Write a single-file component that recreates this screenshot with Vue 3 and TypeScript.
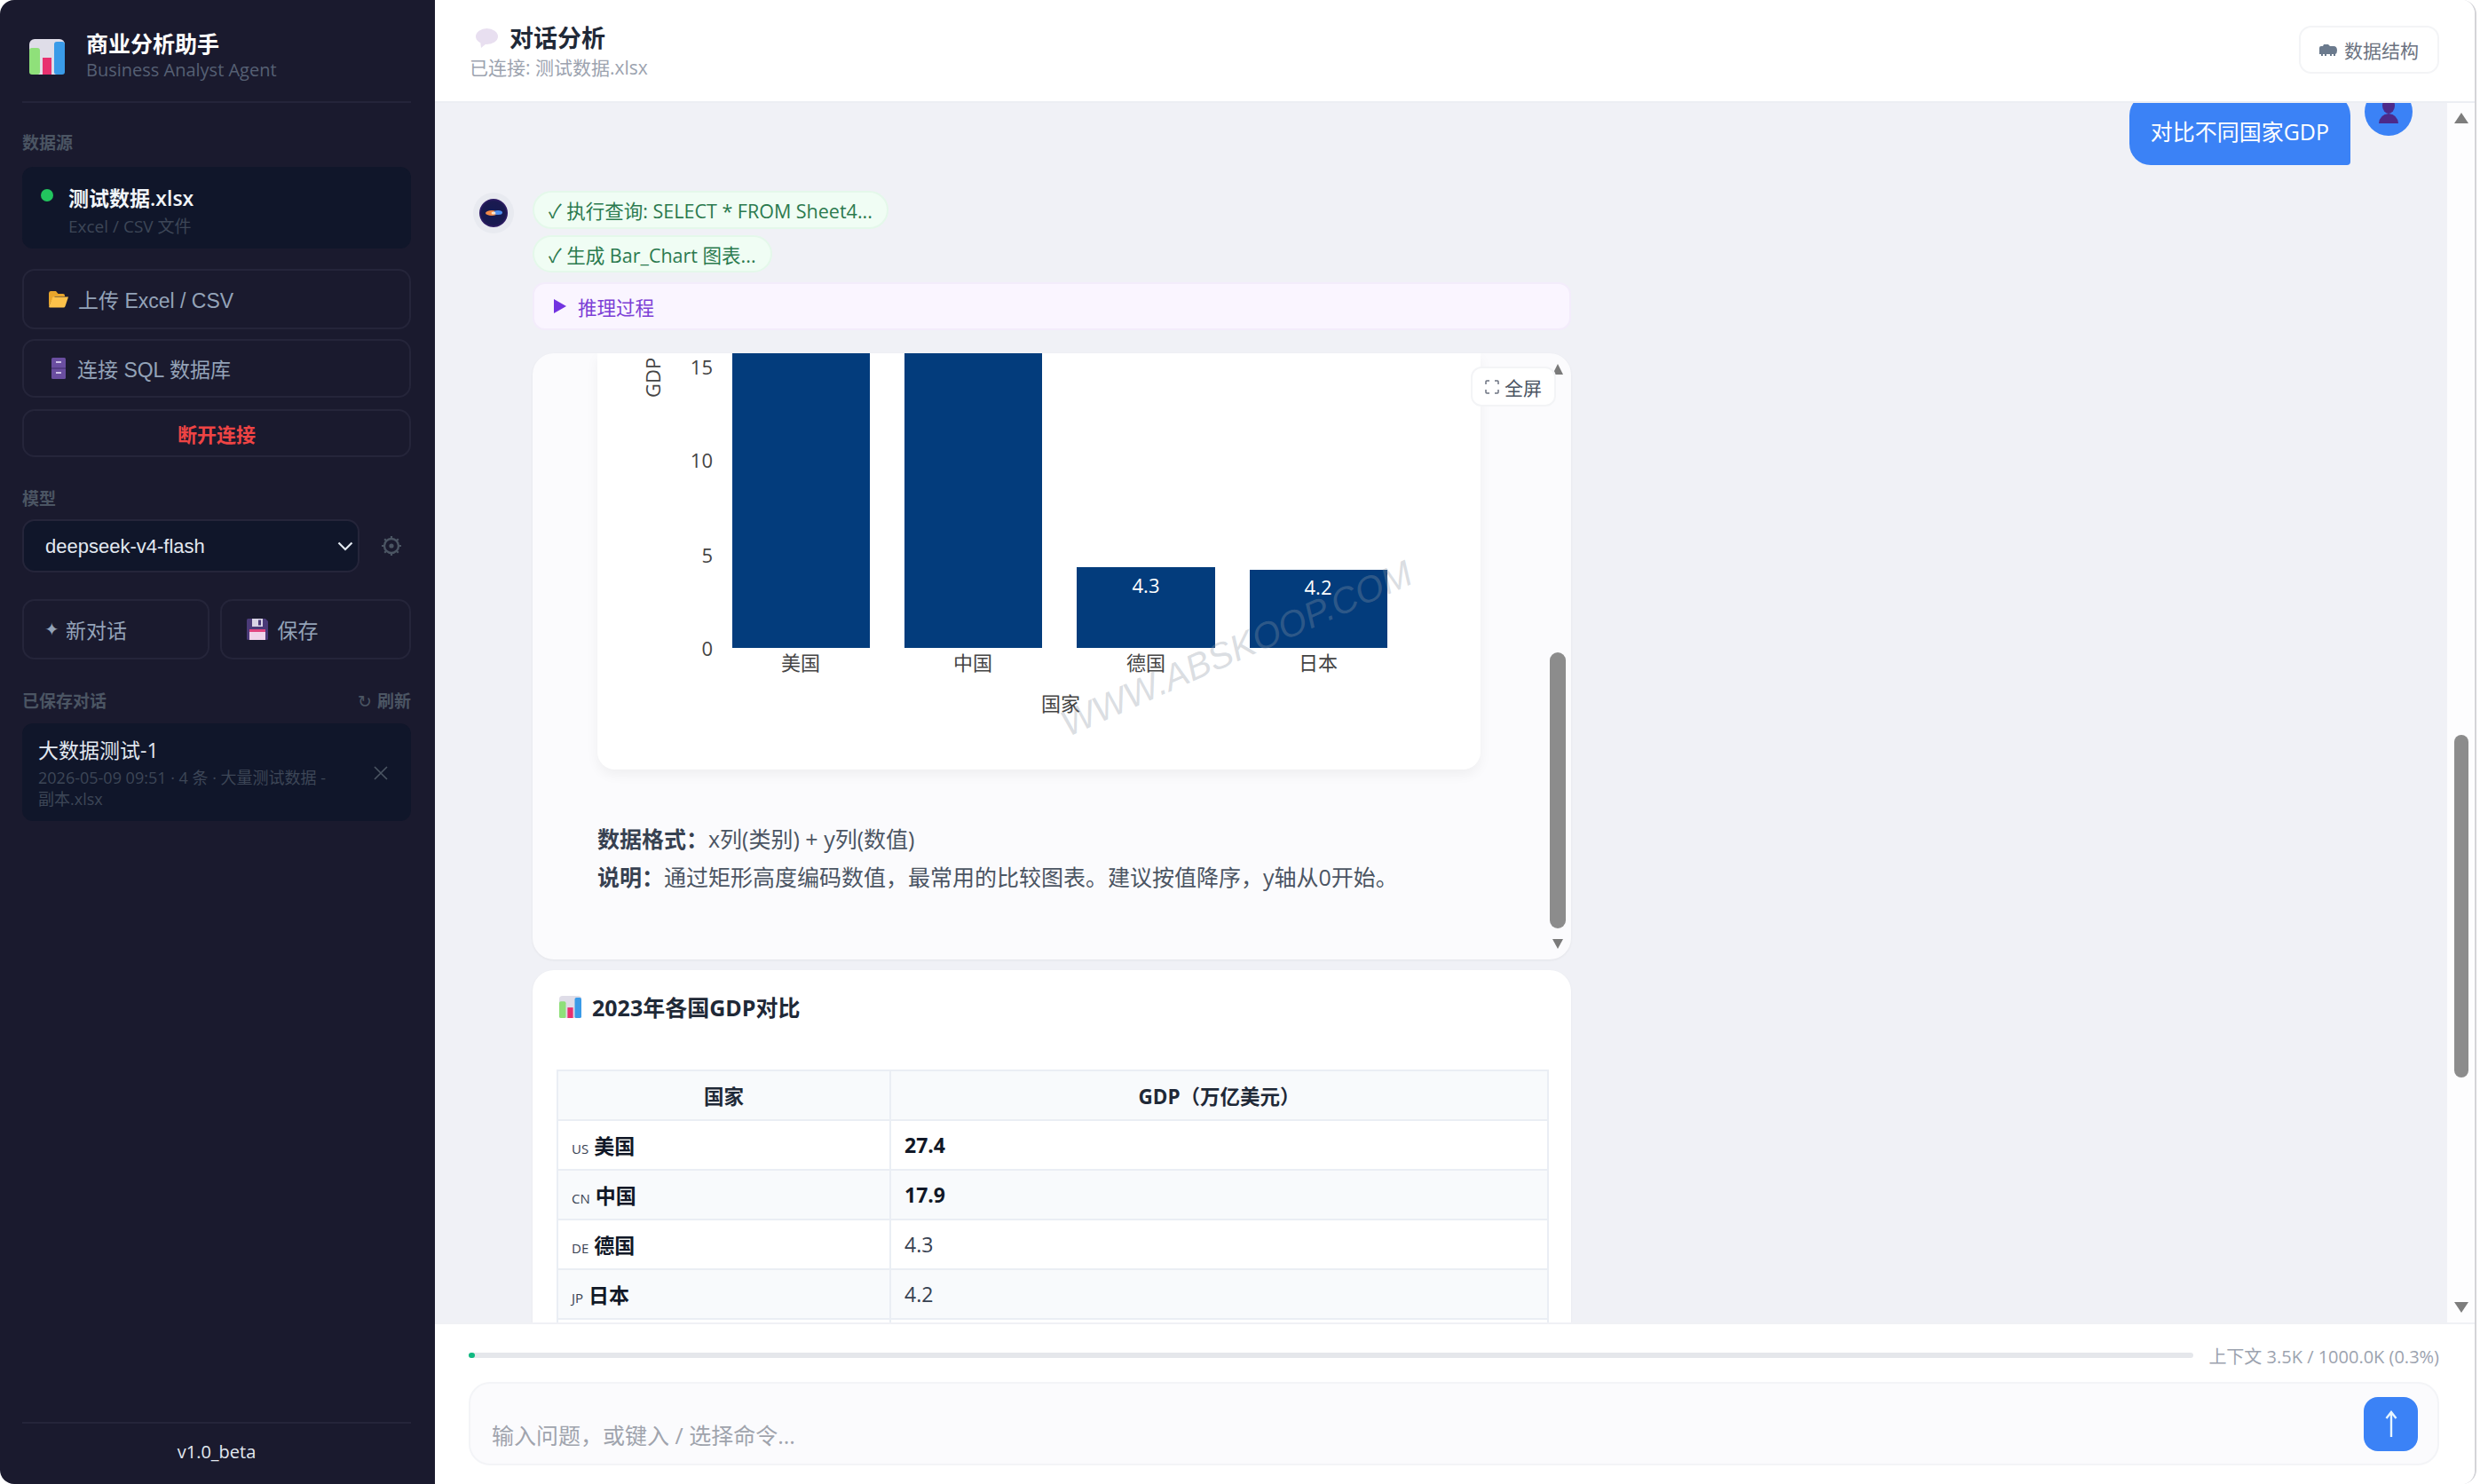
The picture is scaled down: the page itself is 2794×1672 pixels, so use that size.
<script setup lang="ts">
interface GdpRow { code: string; name: string; value: string; strong: boolean }
const rows: GdpRow[] = [
  { code: 'US', name: '美国', value: '27.4', strong: true },
  { code: 'CN', name: '中国', value: '17.9', strong: true },
  { code: 'DE', name: '德国', value: '4.3', strong: false },
  { code: 'JP', name: '日本', value: '4.2', strong: false },
]
interface Bar { x: number; w: number; top: number; label: string; cx: number; value?: string; vy?: number }
const bars: Bar[] = [
  { x: 152, w: 155, top: 0, label: '美国', cx: 229 },
  { x: 346, w: 155, top: 0, label: '中国', cx: 423 },
  { x: 540, w: 156, top: 241, label: '德国', cx: 618, value: '4.3', vy: 270 },
  { x: 735, w: 155, top: 244, label: '日本', cx: 812, value: '4.2', vy: 272 },
]
const ticks = [
  { y: 24, t: '15' },
  { y: 129, t: '10' },
  { y: 236, t: '5' },
  { y: 341, t: '0' },
]
</script>

<template>
  <div class="window">
    <aside class="sidebar">
      <div class="brand">
        <svg class="logo" viewBox="0 0 40 40">
          <rect width="40" height="40" rx="6" fill="#dfdde8" />
          <rect x="0" y="10" width="12" height="30" rx="3" fill="#8fe07a" />
          <rect x="15" y="21" width="10" height="19" fill="#e8306f" />
          <rect x="28" y="3" width="12" height="37" rx="3" fill="#3a9be8" />
        </svg>
        <div class="brand-text">
          <div class="brand-title">商业分析助手</div>
          <div class="brand-sub">Business Analyst Agent</div>
        </div>
      </div>

      <div class="label label-source">数据源</div>
      <div class="source">
        <span class="dot"></span>
        <div>
          <div class="source-name">测试数据.xlsx</div>
          <div class="source-sub">Excel / CSV 文件</div>
        </div>
      </div>
      <button class="side-btn upload">
        <svg class="ico-folder" viewBox="0 0 24 20">
          <path d="M1 3.5Q1 1 3 1h6l2.5 3H17q2 0 2 2v1H8L5 10 1 18Z" fill="#e8a52c" />
          <path d="M5.5 7.5H23L19.5 18q-.5 1.5-2 1.5H2.5q-1.8 0-1.3-1.5Z" fill="#fdc24a" />
        </svg>
        上传 Excel / CSV
      </button>
      <button class="side-btn connect">
        <svg class="ico-cabinet" viewBox="0 0 16 24">
          <rect width="16" height="24" rx="1.5" fill="#6a4ea0" />
          <rect y="11.5" width="16" height="1" fill="#3d2b66" />
          <rect x="5" y="4" width="6" height="2" fill="#cfc3e8" />
          <rect x="5" y="16" width="6" height="2" fill="#cfc3e8" />
        </svg>
        连接 SQL 数据库
      </button>
      <button class="side-btn disconnect">断开连接</button>

      <div class="label label-model">模型</div>
      <div class="model-row">
        <div class="select-wrap">
          <select class="model-select">
            <option>deepseek-v4-flash</option>
          </select>
          <svg class="chevron" viewBox="0 0 18 11">
            <path d="M1.5 1.5 9 9l7.5-7.5" fill="none" stroke="#e2e8f0" stroke-width="2.2" />
          </svg>
        </div>
        <svg class="gear" viewBox="0 0 24 24">
          <circle cx="12" cy="12" r="8" fill="none" stroke="#4b5563" stroke-width="2.4" />
          <circle cx="12" cy="12" r="2.6" fill="#4b5563" />
          <path d="M12 1v3M12 20v3M1 12h3M20 12h3M4.2 4.2l2.2 2.2M17.6 17.6l2.2 2.2M4.2 19.8l2.2-2.2M17.6 6.4l2.2-2.2" stroke="#4b5563" stroke-width="2.2" />
        </svg>
      </div>

      <div class="actions">
        <button class="side-btn act"><span class="spark">✦</span>新对话</button>
        <button class="side-btn act save">
          <svg class="ico-floppy" viewBox="0 0 24 24">
            <path d="M1.5 0H21l3 3v19.5q0 1.5-1.5 1.5h-21Q0 24 0 22.500V1.500Q0 0 1.500 0Z" fill="#4a3a78" />
            <rect x="6" y="0" width="12" height="9" fill="#d9d4e6" />
            <rect x="13" y="1.500" width="3" height="6" fill="#4a3a78" />
            <rect x="3" y="12" width="18" height="3" fill="#e0457f" />
            <rect x="3" y="15" width="18" height="9" fill="#f0d4ea" />
          </svg>
          保存
        </button>
      </div>

      <div class="saved-head">
        <span class="label">已保存对话</span>
        <span class="refresh"><span class="refresh-ico">↻</span>刷新</span>
      </div>
      <div class="saved-card">
        <div class="saved-body">
          <div class="saved-title">大数据测试-1</div>
          <div class="saved-meta">2026-05-09 09:51 · 4 条 · 大量测试数据 - 副本.xlsx</div>
        </div>
        <svg class="saved-x" viewBox="0 0 16 16">
          <path d="M1 1l14 14M15 1 1 15" stroke="#4b5563" stroke-width="1.6" />
        </svg>
      </div>

      <div class="side-foot">v1.0_beta</div>
    </aside>

    <main class="main">
      <header class="topbar">
        <div>
          <div class="top-title">
            <svg class="ico-balloon" viewBox="0 0 26 22">
              <ellipse cx="13.500" cy="9" rx="12.500" ry="9" fill="#e8dff0" />
              <path d="M6 14l1 8 6-5Z" fill="#e8dff0" />
            </svg>
            对话分析
          </div>
          <div class="top-sub">已连接: 测试数据.xlsx</div>
        </div>
        <button class="schema-btn">
          <svg class="ico-schema" viewBox="0 0 20 13">
            <path d="M0 4q0-2 2-2h2l1-2h5l2 2h4q4 0 4 5 0 3-2 4v2h-2v-2h-2v2h-2v-2H8v2H6v-2H4v2H2v-2H0Z" fill="#6b7a8d" />
          </svg>
          数据结构
        </button>
      </header>

      <div class="chat">
        <div class="messages">
          <div class="user-row">
            <div class="bubble">对比不同国家GDP</div>
            <div class="user-avatar">
              <svg viewBox="0 0 54 54" width="54" height="54">
                <ellipse cx="27" cy="20" rx="7" ry="9" fill="#4c2a8a" />
                <path d="M16 40q1-10 11-11 10 1 11 11Z" fill="#4c2a8a" />
              </svg>
            </div>
          </div>

          <div class="bot-row">
            <div class="bot-avatar">
              <svg viewBox="0 0 32 32" width="32" height="32">
                <defs>
                  <radialGradient id="orb" cx="50%" cy="50%" r="55%">
                    <stop offset="0%" stop-color="#141a52" />
                    <stop offset="75%" stop-color="#1a1a50" />
                    <stop offset="100%" stop-color="#43207a" />
                  </radialGradient>
                </defs>
                <circle cx="16" cy="16" r="16" fill="url(#orb)" />
                <ellipse cx="14" cy="16" rx="7" ry="3" fill="#f28a4a" />
                <ellipse cx="21" cy="15.500" rx="5" ry="2.500" fill="#4f8ff0" />
                <ellipse cx="16" cy="16" rx="2.500" ry="1.500" fill="#fde6d0" />
              </svg>
            </div>
            <div class="bot-col">
              <div class="pill pill-1">✓ 执行查询: SELECT * FROM Sheet4...</div>
              <div class="pill pill-2">✓ 生成 Bar_Chart 图表...</div>
              <div class="reason"><span class="tri"></span>推理过程</div>

              <div class="chart-wrap">
                <div class="chart-card">
                  <svg class="chart" viewBox="0 0 995 469" width="995" height="469">
                    <rect
                      v-for="b in bars"
                      :key="b.label"
                      :x="b.x"
                      :y="b.top"
                      :width="b.w"
                      :height="332 - b.top"
                      fill="#033c7c"
                    />
                    <text v-for="t in ticks" :key="t.t" x="130" :y="t.y" text-anchor="end" class="tick">{{ t.t }}</text>
                    <text v-for="b in bars" :key="b.label + 'l'" :x="b.cx" y="357" text-anchor="middle" class="tick">{{ b.label }}</text>
                    <template v-for="b in bars" :key="b.label + 'v'">
                      <text v-if="b.value" :x="b.cx" :y="b.vy" text-anchor="middle" class="val">{{ b.value }}</text>
                    </template>
                    <text x="522" y="403" text-anchor="middle" class="tick">国家</text>
                    <text transform="translate(71 50) rotate(-90)" class="tick">GDP</text>
                  </svg>
                </div>
                <div class="chart-desc">
                  <p><strong>数据格式：</strong>x列(类别) + y列(数值)</p>
                  <p><strong>说明：</strong>通过矩形高度编码数值，最常用的比较图表。建议按值降序，y轴从0开始。</p>
                </div>
                <div class="watermark">WWW.ABSKOOP.COM</div>
                <span class="mini-up"></span>
                <button class="full-btn">
                  <svg class="ico-full" viewBox="0 0 16 16">
                    <path d="M1 5V2q0-1 1-1h3M11 1h3q1 0 1 1v3M15 11v3q0 1-1 1h-3M5 15H2q-1 0-1-1v-3" fill="none" stroke="#6b7280" stroke-width="1.500" />
                  </svg>
                  全屏
                </button>
                <div class="mini-thumb"></div>
                <span class="mini-down"></span>
              </div>

              <div class="table-card">
                <div class="table-title">
                  <svg class="ico-bars" viewBox="0 0 40 40">
                    <rect width="40" height="40" rx="6" fill="#dfdde8" />
                    <rect x="0" y="10" width="12" height="30" rx="3" fill="#8fe07a" />
                    <rect x="15" y="21" width="10" height="19" fill="#e8306f" />
                    <rect x="28" y="3" width="12" height="37" rx="3" fill="#3a9be8" />
                  </svg>
                  2023年各国GDP对比
                </div>
                <table class="gdp">
                  <thead>
                    <tr><th class="c1">国家</th><th>GDP（万亿美元）</th></tr>
                  </thead>
                  <tbody>
                    <tr v-for="r in rows" :key="r.code">
                      <td><span class="code">{{ r.code }}</span> <strong>{{ r.name }}</strong></td>
                      <td>
                        <strong v-if="r.strong">{{ r.value }}</strong>
                        <template v-else>{{ r.value }}</template>
                      </td>
                    </tr>
                    <tr><td>&nbsp;</td><td></td></tr>
                  </tbody>
                </table>
              </div>
            </div>
          </div>
        </div>
        <div class="scrollbar">
          <span class="arrow-up"></span>
          <div class="thumb"></div>
          <span class="arrow-down"></span>
        </div>
      </div>

      <footer class="composer">
        <div class="ctx">
          <div class="ctx-bar"><div class="ctx-fill"></div></div>
          <span class="ctx-text">上下文 3.5K / 1000.0K (0.3%)</span>
        </div>
        <div class="input-box">
          <input class="input" placeholder="输入问题，或键入 / 选择命令..." />
          <button class="send">
            <svg viewBox="0 0 16 30" width="16" height="30">
              <path d="M8 30V3M2.500 9 8 2l5.500 7" fill="none" stroke="#e6f5ff" stroke-width="2.400" />
            </svg>
          </button>
        </div>
      </footer>
    </main>
  </div>
</template>

<style>
html, body { margin: 0; background: #ffffff; }
</style>

<style scoped>
* { box-sizing: border-box; }
.window {
  width: 2790px;
  height: 1672px;
  display: flex;
  border-radius: 16px;
  overflow: hidden;
  border-right: 2px solid #d4d4d8;
  font-family: "Open Sans", "Noto Sans CJK SC", sans-serif;
  background: #fff;
}

/* Sidebar */
.sidebar {
  width: 490px;
  flex: none;
  background: #1a1a2e;
  padding: 0 27px 0 25px;
  display: flex;
  flex-direction: column;
}
.brand {
  height: 116px;
  border-bottom: 2px solid #24243a;
  display: flex;
  padding: 33px 0 0 8px;
  gap: 24px;
}
.logo { width: 40px; height: 40px; margin-top: 11px; flex: none; }
.brand-title { font-size: 25px; font-weight: 700; color: #fff; line-height: 32px; }
.brand-sub { font-size: 20px; color: #566074; line-height: 26px; margin-top: 1px; }
.label {
  font-size: 19px;
  font-weight: 700;
  color: #4b5563;
  line-height: 20px;
}
.label-source { margin-top: 35px; }
.source {
  margin-top: 17px;
  height: 92px;
  background: #10162a;
  border-radius: 12px;
  display: flex;
  padding: 19px 0 0 21px;
  gap: 17px;
}
.dot {
  width: 14px;
  height: 14px;
  border-radius: 50%;
  background: #22c55e;
  margin-top: 6px;
  flex: none;
}
.source-name { font-size: 23px; font-weight: 600; color: #f1f5f9; line-height: 32px; }
.source-sub { font-size: 19px; color: #3d4657; line-height: 26px; margin-top: 3px; }
.side-btn {
  display: flex;
  align-items: center;
  width: 100%;
  background: transparent;
  border: 2px solid #25253a;
  border-radius: 14px;
  color: #94a3b8;
  font-family: "Liberation Sans", "Noto Sans CJK SC", sans-serif;
  font-size: 23px;
  padding: 0;
}
.upload { margin-top: 23px; height: 68px; padding-left: 27px; gap: 10px; }
.connect { margin-top: 11px; height: 66px; padding-left: 31px; gap: 13px; }
.disconnect {
  margin-top: 13px;
  height: 54px;
  justify-content: center;
  color: #ef4444;
  font-size: 22px;
  font-weight: 700;
}
.ico-folder { width: 24px; height: 20px; }
.ico-cabinet { width: 16px; height: 24px; }
.label-model { margin-top: 37px; }
.model-row { margin-top: 13px; display: flex; align-items: center; }
.select-wrap { position: relative; width: 380px; height: 60px; flex: none; }
.model-select {
  appearance: none;
  width: 100%;
  height: 100%;
  background: #10162a;
  border: 2px solid #25253a;
  border-radius: 14px;
  color: #e2e8f0;
  font-family: "Liberation Sans", sans-serif;
  font-size: 22px;
  padding-left: 24px;
}
.chevron { position: absolute; right: 7px; top: 25px; width: 18px; height: 11px; }
.gear { width: 24px; height: 24px; margin-left: 24px; }
.actions { margin-top: 30px; display: flex; gap: 12px; }
.act { height: 68px; flex: 1; min-width: 0; }
.act:first-child { padding-left: 23px; }
.spark { font-size: 20px; margin-right: 7px; }
.save { padding-left: 28px; gap: 11px; }
.ico-floppy { width: 24px; height: 24px; }
.saved-head {
  margin-top: 37px;
  display: flex;
  justify-content: space-between;
  align-items: center;
}
.refresh { font-size: 19px; font-weight: 700; color: #4b5563; line-height: 20px; }
.refresh-ico { margin-right: 6px; font-family: "DejaVu Sans", sans-serif; font-weight: 400; }
.saved-card {
  margin-top: 15px;
  height: 110px;
  background: #10162a;
  border-radius: 12px;
  display: flex;
  padding: 15px 26px 0 18px;
  justify-content: space-between;
}
.saved-body { width: 340px; }
.saved-title { font-size: 23px; color: #e2e8f0; line-height: 31px; }
.saved-meta { font-size: 18px; line-height: 24px; color: #3d4657; margin-top: 3px; }
.saved-x { width: 16px; height: 16px; margin-top: 33px; flex: none; }
.side-foot {
  margin-top: auto;
  height: 70px;
  border-top: 2px solid #25253a;
  color: #e2e8f0;
  font-size: 20px;
  text-align: center;
  padding-top: 18px;
  line-height: 28px;
}

/* Main */
.main { flex: 1; min-width: 0; display: flex; flex-direction: column; }
.topbar {
  height: 116px;
  flex: none;
  border-bottom: 2px solid #eceef3;
  background: #fff;
  display: flex;
  justify-content: space-between;
  align-items: flex-start;
  padding: 24px 40px 0 39px;
}
.top-title {
  display: flex;
  align-items: center;
  font-size: 27px;
  font-weight: 700;
  color: #1f2937;
  line-height: 38px;
  padding-left: 6px;
  gap: 13px;
}
.ico-balloon { width: 26px; height: 22px; }
.top-sub { font-size: 21px; color: #9ca3af; line-height: 28px; margin-top: 0; }
.schema-btn {
  margin-top: 5px;
  width: 158px;
  height: 54px;
  background: #fff;
  border: 2px solid #f3f4f6;
  border-radius: 14px;
  display: flex;
  align-items: center;
  justify-content: center;
  gap: 8px;
  color: #6b7280;
  font-family: inherit;
  font-size: 21px;
  padding: 0;
}
.ico-schema { width: 20px; height: 13px; }

.chat { height: 1374px; flex: none; display: flex; overflow: hidden; }
.messages {
  flex: 1;
  min-width: 0;
  background: #f0f1f6;
  padding: 0 39px 0 43px;
  overflow: hidden;
}
.user-row {
  display: flex;
  justify-content: flex-end;
  gap: 16px;
  margin-top: -10px;
}
.bubble {
  height: 80px;
  background: #3b82f6;
  color: #fff;
  font-size: 25px;
  line-height: 84px;
  padding: 0 24px;
  border-radius: 24px 24px 4px 24px;
}
.user-avatar {
  width: 54px;
  height: 54px;
  margin-top: -7px;
  border-radius: 50%;
  background: #3b82f6;
  overflow: hidden;
}
.bot-row { display: flex; gap: 21px; margin-top: 29px; }
.bot-avatar {
  width: 46px;
  height: 46px;
  margin-top: 2px;
  border-radius: 50%;
  background: #e8eaf0;
  display: flex;
  align-items: center;
  justify-content: center;
  flex: none;
}
.bot-col { width: 1170px; flex: none; }
.pill {
  width: fit-content;
  background: #f0fdf4;
  border: 2px solid #e4f8ea;
  border-radius: 22px;
  color: #2b7a4e;
  font-size: 21.500px;
  padding: 0 16px;
  display: flex;
  align-items: center;
  white-space: pre;
}
.pill-1 { height: 43px; }
.pill-2 { height: 42px; margin-top: 7px; }
.reason {
  margin-top: 11px;
  height: 54px;
  background: #faf5ff;
  border: 2px solid #f3ecfb;
  border-radius: 14px;
  color: #7c3fd6;
  font-size: 21.500px;
  display: flex;
  align-items: center;
  padding-left: 22px;
}
.tri {
  width: 0;
  height: 0;
  border-left: 14px solid #7233e0;
  border-top: 8px solid transparent;
  border-bottom: 8px solid transparent;
  margin-right: 13px;
}
.chart-wrap {
  position: relative;
  margin-top: 26px;
  height: 683px;
  background: #fbfbfd;
  border-radius: 24px;
  overflow: hidden;
  padding-left: 73px;
  box-shadow: 0 1px 3px rgba(0, 0, 0, 0.06);
}
.chart-card {
  width: 995px;
  height: 469px;
  background: #fff;
  border-radius: 0 0 20px 20px;
  box-shadow: 0 6px 14px rgba(0, 0, 0, 0.05);
}
.chart { display: block; }
.tick {
  font-family: "Open Sans", "Noto Sans CJK SC", sans-serif;
  font-size: 22px;
  fill: #444;
}
.val {
  font-family: "Open Sans", sans-serif;
  font-size: 22px;
  fill: #fff;
}
.chart-desc { margin-top: 57px; font-size: 25px; color: #4b5563; line-height: 43px; }
.chart-desc p { margin: 0; }
.chart-desc strong { color: #374151; font-weight: 700; }
.watermark {
  position: absolute;
  left: 793px;
  top: 333px;
  transform: translate(-50%, -50%) rotate(-24deg);
  font-family: "Liberation Sans", sans-serif;
  font-style: italic;
  font-size: 41px;
  color: rgba(140, 150, 165, 0.32);
  white-space: nowrap;
}
.full-btn {
  position: absolute;
  top: 15px;
  right: 17px;
  width: 96px;
  height: 45px;
  background: #fff;
  border: 2px solid #f3f4f6;
  border-radius: 12px;
  display: flex;
  align-items: center;
  justify-content: center;
  gap: 6px;
  color: #4b5563;
  font-family: inherit;
  font-size: 21px;
  padding: 0;
}
.ico-full { width: 16px; height: 16px; }
.mini-thumb {
  position: absolute;
  top: 337px;
  right: 6px;
  width: 18px;
  height: 311px;
  background: #8c8c8c;
  border-radius: 9px;
}
.mini-up, .mini-down {
  position: absolute;
  right: 9px;
  width: 0;
  height: 0;
  border-left: 6px solid transparent;
  border-right: 6px solid transparent;
}
.mini-up { top: 12px; border-bottom: 12px solid #7a7a7a; }
.mini-down { top: 660px; border-top: 11px solid #7a7a7a; }

.table-card {
  margin-top: 12px;
  background: #fff;
  border-radius: 24px 24px 0 0;
  padding: 16px 25px 0 27px;
  box-shadow: 0 1px 3px rgba(0, 0, 0, 0.05);
}
.table-title {
  height: 50px;
  display: flex;
  align-items: center;
  gap: 12px;
  padding-left: 3px;
  font-size: 25px;
  font-weight: 700;
  color: #1f2937;
}
.ico-bars { width: 25px; height: 25px; }
.gdp {
  margin-top: 46px;
  width: 1118px;
  table-layout: fixed;
  border-collapse: collapse;
  font-size: 23px;
  color: #374151;
}
.gdp th, .gdp td {
  border: 2px solid #eaeef4;
  height: 56px;
  padding: 0 15px;
  text-align: left;
}
.gdp th {
  background: #f8fafc;
  text-align: center;
  font-weight: 700;
  font-size: 22.500px;
  color: #1f2937;
}
.gdp .c1 { width: 375px; }
.gdp tbody tr:nth-child(even) td { background: #f8fafc; }
.gdp strong { color: #111827; font-weight: 700; }
.code { font-size: 15px; }

.scrollbar {
  width: 31px;
  flex: none;
  background: #fdfdfe;
  display: flex;
  flex-direction: column;
  align-items: center;
  padding: 11px 0;
}
.arrow-up, .arrow-down {
  width: 0;
  height: 0;
  border-left: 8px solid transparent;
  border-right: 8px solid transparent;
  flex: none;
}
.arrow-up { border-bottom: 12px solid #7d7d7d; }
.thumb {
  width: 16px;
  height: 386px;
  margin-top: 689px;
  background: #8c8c8c;
  border-radius: 8px;
}
.arrow-down { margin-top: auto; border-top: 12px solid #7d7d7d; }

.composer {
  flex: 1;
  border-top: 2px solid #f0f1f5;
  background: #fff;
  padding: 0 40px 0 38px;
}
.ctx {
  height: 65px;
  display: flex;
  align-items: center;
  gap: 17px;
  padding-top: 5px;
}
.ctx-bar { flex: 1; height: 6px; background: #e5e7eb; border-radius: 3px; }
.ctx-fill { width: 7px; height: 6px; background: #10b981; border-radius: 3px; }
.ctx-text { font-size: 20px; color: #9ca3af; white-space: nowrap; }
.input-box {
  height: 94px;
  background: #fbfbfd;
  border: 2px solid #f3f4f7;
  border-radius: 24px;
  display: flex;
  align-items: center;
  padding: 0 22px 0 24px;
}
.input {
  flex: 1;
  border: none;
  outline: none;
  background: transparent;
  font-family: inherit;
  font-size: 25px;
  margin-top: 26px;
  padding: 0;
}
.input::placeholder { color: #a0a4ad; }
.send {
  width: 61px;
  height: 61px;
  border: none;
  border-radius: 16px;
  background: #3b82f6;
  display: flex;
  align-items: center;
  justify-content: center;
  padding: 0;
  margin-top: 0;
}
</style>
